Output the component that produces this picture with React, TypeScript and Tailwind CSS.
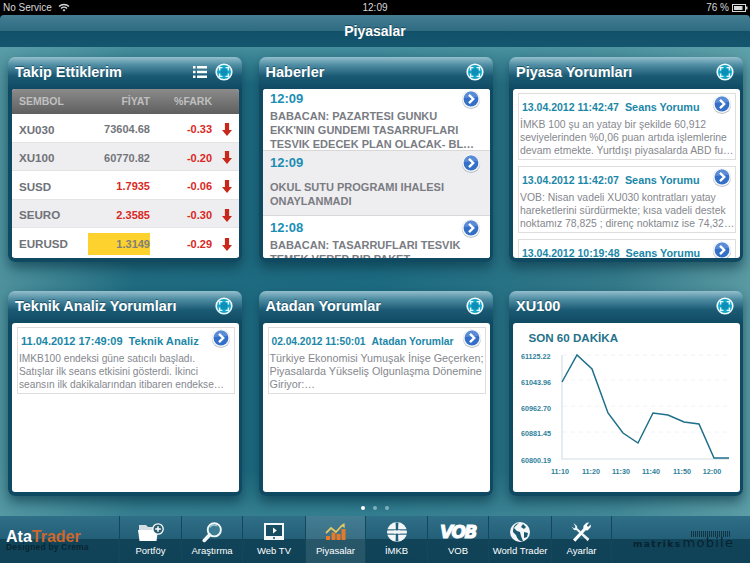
import React from "react";

function Expand() {
  return (
    <svg width="18" height="18" viewBox="0 0 18 18" className="shrink-0">
      <circle cx="9" cy="9" r="8.6" fill="#f2fbfd" />
      <circle cx="9" cy="9" r="7" fill="#12a6cc" />
      <circle cx="9" cy="9" r="3.6" fill="#0b8fb6" />
      <path d="M4.600 7.400V4.600h2.800M10.600 4.600h2.800v2.800M13.400 10.600v2.800h-2.800M7.400 13.400H4.600v-2.800" fill="none" stroke="#eaf9fd" strokeWidth="1.400" />
    </svg>
  );
}

function Go() {
  return (
    <svg width="20" height="20" viewBox="0 0 20 20" className="shrink-0">
      <circle cx="10" cy="10.800" r="9.200" fill="#8f98a3" opacity=".6" />
      <circle cx="10" cy="10" r="9" fill="#f4f6f9" />
      <circle cx="10" cy="10" r="7.400" fill="#3470c8" />
      <path d="M2.800 9a7.400 7.400 0 0 1 14.400 -1z" fill="#7aa3e4" opacity=".55" />
      <path d="M8 5.800l4.200 4.200L8 14.200" fill="none" stroke="#fff" strokeWidth="2.400" />
    </svg>
  );
}

function Down() {
  return (
    <svg width="10" height="13" viewBox="0 0 10 13" className="shrink-0">
      <path d="M2.900 0h4.200v7H10l-5 6-5-6h2.900z" fill="#c8281a" />
    </svg>
  );
}

function Panel({ title, extra, children }: { title: string; extra?: React.ReactNode; children: React.ReactNode }) {
  return (
    <div className="h-[205px] rounded-[7px] pl-1 pr-[3px] pb-1 shadow-[0_6px_12px_rgba(8,50,66,.6)] flex flex-col bg-[linear-gradient(#94bfcd_0px,#4f8da3_8px,#1b5a74_19px,#0f4a62_32px)]">
      <div className="h-8 shrink-0 flex items-center pl-[3px] pr-[6px] pb-[2px] gap-2">
        <div className="flex-1 text-white font-bold text-[14.5px] leading-none whitespace-nowrap [text-shadow:0_-1px_0_rgba(0,40,60,.5)]">{title}</div>
        {extra}
        <Expand />
      </div>
      <div className="flex-1 min-h-0 bg-white rounded-[3px] overflow-hidden">{children}</div>
    </div>
  );
}

const rows = [
  ["XU030", "73604.68", "-0.33", false, false],
  ["XU100", "60770.82", "-0.20", false, true],
  ["SUSD", "1.7935", "-0.06", true, false],
  ["SEURO", "2.3585", "-0.30", true, true],
  ["EURUSD", "1.3149", "-0.29", false, false],
] as const;

function Table() {
  return (
    <div className="font-bold">
      <div className="h-[25px] flex items-center bg-[linear-gradient(#8b8b8b,#5f5f5f)] text-[#c0c0c0] text-[10.5px] pl-[7px]">
        <div className="w-[60px]">SEMBOL</div>
        <div className="w-[71px] text-right">FİYAT</div>
        <div className="w-[62px] text-right">%FARK</div>
      </div>
      {rows.map(([a, b, c, red, alt], i) => (
        <div key={a} className={`h-[28.6px] flex items-center pl-[7px] pt-[3px] ${alt ? "bg-[#eeedef]" : "bg-white"} ${i < 4 ? "border-b border-[#e4e4e4]" : ""}`}>
          <div className="w-[60px] text-[#6f7279] text-[11.6px]">{a}</div>
          <div className="w-[71px] flex justify-end text-[11px]">
            <div className={`text-right ${i === 4 ? "bg-[#fdd22f] w-[62px] h-[22px] leading-[22px] text-[#808078]" : ""} ${red ? "text-[#d9281e]" : "text-[#73757b]"}`}>{b}</div>
          </div>
          <div className="w-[62px] text-right text-[#d9281e] text-[11px]">{c}</div>
          <div className="ml-[10px]"><Down /></div>
        </div>
      ))}
    </div>
  );
}

const news = [
  { t: "12:09", lines: ["BABACAN: PAZARTESI GUNKU", "EKK'NIN GUNDEMI TASARRUFLARI", "TESVIK EDECEK PLAN OLACAK- BL…"], cls: "bg-white h-[62px] pt-[1px]", blank: false },
  { t: "12:09", lines: ["OKUL SUTU PROGRAMI IHALESI", "ONAYLANMADI"], cls: "bg-[#eeedef] h-[65px] pt-[3px]", blank: true },
  { t: "12:08", lines: ["BABACAN: TASARRUFLARI TESVIK", "TEMEK VEREP BIR PAKET"], cls: "bg-white h-[64px] pt-[3px]", blank: false },
];

function News() {
  return (
    <div>
      {news.map((n, i) => (
        <div key={i} className={`pl-[7.5px] pr-[9px] border-b border-[#d8d8d8] ${n.cls}`}>
          <div className="flex items-center justify-between h-[18px]">
            <span className="text-[#1b8db5] font-bold text-[13px]">{n.t}</span>
            <Go />
          </div>
          <div className={`text-[#797c83] font-bold text-[11px] leading-[14px] whitespace-nowrap ${n.blank ? "mt-[8px]" : "mt-[1px]"}`}>
            {n.lines.map((l, j) => <div key={j} className="h-[14px]">{l}</div>)}
          </div>
        </div>
      ))}
    </div>
  );
}

function Comment({ head, kind, lines, headCls, kindCls, bodyCls }: { head: string; kind: string; lines: string[]; headCls: string; kindCls: string; bodyCls: string }) {
  return (
    <div className="border border-[#dedede] bg-white pl-[1px] pr-[3px] h-[67px] mb-[6px]">
      <div className="flex items-start justify-between h-[20px]">
        <div className="text-[#1b87a8] font-bold whitespace-nowrap pl-[2px] mt-[4px] leading-[16px]">
          <span className={headCls}>{head}</span>
          <span className={`ml-[6px] ${kindCls}`}>{kind}</span>
        </div>
        <Go />
      </div>
      <div className={`text-[#85888e] leading-[13px] mt-[4px] whitespace-nowrap ${bodyCls}`}>
        {lines.map((l, i) => <div key={i}>{l}</div>)}
      </div>
    </div>
  );
}

function Chart() {
  const font = "'Liberation Sans',sans-serif";
  return (
    <svg width="227" height="168" viewBox="0 0 227 168" className="block">
      <text x="15.500" y="19" fontSize="11.600" fontWeight="700" fill="#24728a" fontFamily={font}>SON 60 DAKİKA</text>
      {[32, 57, 83, 109].map((y) => (
        <line key={y} x1="50" x2="216" y1={y} y2={y} stroke="#eef2f4" strokeDasharray="4 4" />
      ))}
      <path d="M49 32V136H216" fill="none" stroke="#dfe8ec" strokeWidth="1.600" />
      <polyline points="49,59 64,32 79,46 95,90 110,110 125,120 140,90 155,92 171,99 186,101 201,135 216,135" fill="none" stroke="#1f6f8a" strokeWidth="1.500" />
      {["61125.22", "61043.96", "60962.70", "60881.45", "60800.19"].map((t, i) => (
        <text key={t} x="8" y={[36, 62, 88, 113, 140][i]} fontSize="7.200" fontWeight="700" fill="#2f7f9a" fontFamily={font}>{t}</text>
      ))}
      {["11:10", "11:20", "11:30", "11:40", "11:50", "12:00"].map((t, i) => (
        <text key={t} x={[47, 78, 108, 138, 169, 199][i]} y="151" textAnchor="middle" fontSize="7.200" fontWeight="700" fill="#2f7f9a" fontFamily={font}>{t}</text>
      ))}
    </svg>
  );
}

const tabs: { label: string; icon: React.ReactNode; active?: boolean; cls: string }[] = [
  { label: "Portföy", cls: "w-[62px]", icon: (
    <svg width="26" height="18" viewBox="0 0 26 18"><path d="M1 6V2h7l2 2h9v3H1z" fill="#d5dfe3" /><path d="M0 7h20l-1.500 11H1.500z" fill="#fff" /><circle cx="20" cy="6" r="5.200" fill="#2a5c70" stroke="#fff" strokeWidth="1.300" /><path d="M20 3.200v5.600M17.200 6h5.600" stroke="#fff" strokeWidth="1.500" /></svg>
  ) },
  { label: "Araştırma", cls: "w-[61px]", icon: (
    <svg width="20" height="21" viewBox="0 0 20 21"><circle cx="12.300" cy="7.800" r="6.600" fill="#3b7d93" stroke="#f2f6f7" strokeWidth="1.900" /><path d="M7.800 5.500a5 5 0 0 1 7-1.500" fill="none" stroke="#a8cad5" strokeWidth="1.200" /><path d="M7.500 13L2.300 18.400" stroke="#f2f6f7" strokeWidth="3.600" strokeLinecap="round" /></svg>
  ) },
  { label: "Web TV", cls: "w-[63px]", icon: (
    <svg width="20" height="18" viewBox="0 0 20 18"><rect x="0" y="0" width="20" height="17" fill="#f4f7f8" /><rect x="2" y="2" width="16" height="11" fill="#174c61" /><path d="M9 4.500l3.800 3-3.800 3z" fill="#fff" /><circle cx="10" cy="15" r="1" fill="#174c61" /></svg>
  ) },
  { label: "Piyasalar", active: true, cls: "w-[60px]", icon: (
    <svg width="21" height="18" viewBox="0 0 21 18"><path d="M1 17v-4h4v4zM6.500 17V9.500h4V17zM11.500 17v-6h4v6zM16.500 17V6h4v11z" fill="#e4792a" /><path d="M1 10l5-5 5 4 6-6.500" fill="none" stroke="#e2c765" strokeWidth="1.800" /><path d="M19.500 0l.3 5-4.300-2.500z" fill="#e2c765" /></svg>
  ) },
  { label: "İMKB", cls: "w-[62px]", icon: (
    <svg width="20" height="20" viewBox="0 0 20 20"><circle cx="10" cy="10" r="10" fill="#f2f6f7" /><path d="M8.500 0.500C9 4 9 16 8.500 19.500h3C11 16 11 4 11.500 0.500z" fill="#21607a" /><rect x="0" y="7.300" width="20" height="1.100" fill="#21607a" /><rect x="0" y="11.600" width="20" height="1.100" fill="#21607a" /><rect x="7" y="8.400" width="6" height="3.200" fill="#f2f6f7" /></svg>
  ) },
  { label: "VOB", cls: "w-[61px]", icon: (
    <span className="text-white font-bold italic text-[17px] tracking-[-1.5px] font-['DejaVu_Sans'] leading-none [-webkit-text-stroke:1px_white]">VOB</span>
  ) },
  { label: "World Trader", cls: "w-[63px]", icon: (
    <svg width="20" height="20" viewBox="0 0 20 20"><circle cx="10" cy="10" r="10" fill="#f2f6f7" /><path d="M9 1c-2 2-4 3-5 5l3 3 3 1 1 4 2 5c-4 1-6-3-7-6l-3-3C3 4 5 2 9 1zM13 2l3 3-2 2-3-2zM14 10l4 1-1 4-3 1z" fill="#1c5770" /></svg>
  ) },
  { label: "Ayarlar", cls: "w-[60px]", icon: (
    <svg width="21" height="21" viewBox="0 0 21 21"><path d="M2.500 1L6 4l.3 2.300 12 10.500-1.500 2.500L5.500 8.300 3 8 .6 4.500l2.600 2L4.500 5z" fill="#eef3f4" /><path d="M2 17.500L12.300 6.600 12.500 3.800 15.500.8 18.300.6 15.800 3.300 17 5 19.700 2.500 19.800 5 16.800 8.300 14.500 8.600 4.300 19.800z" fill="#fff" /></svg>
  ) },
];

export default function App() {
  return (
    <div className="w-[750px] h-[563px] overflow-hidden flex flex-col font-['Liberation_Sans',Arial,sans-serif] bg-black">
      <div className="h-[15px] shrink-0 bg-black text-[#d8d8d8] text-[10px] leading-[15px] px-[3px] flex items-center relative">
        <span>No Service</span>
        <svg className="ml-[6px]" width="12" height="9" viewBox="0 0 12 9"><path d="M6 8.500L4.500 7a2 2 0 0 1 3 0zM3.500 6L2.500 5a5 5 0 0 1 7 0l-1 1a3.600 3.600 0 0 0-5 0zM1.500 4L.5 3a8 8 0 0 1 11 0l-1 1a6.500 6.500 0 0 0-9 0z" fill="#d8d8d8" /></svg>
        <span className="absolute left-0 right-0 text-center">12:09</span>
        <div className="ml-auto flex items-center gap-[3px] -mr-[1px]">
          <span>76 %</span>
          <svg width="16" height="8" viewBox="0 0 16 8"><rect x=".5" y=".5" width="13" height="7" fill="none" stroke="#d8d8d8" /><rect x="2" y="2" width="8.500" height="4" fill="#d8d8d8" /><rect x="14" y="2.500" width="1.500" height="3" fill="#d8d8d8" /></svg>
        </div>
      </div>

      <div className="h-[32px] shrink-0 rounded-t-[4px] bg-[linear-gradient(#437e93_0%,#2f6b81_50%,#125069_50%,#15566f_100%)] flex items-center justify-center text-white font-bold text-[14px] [text-shadow:0_-1px_0_rgba(0,30,50,.5)]">
        Piyasalar
      </div>

      <div className="flex-1 min-h-0 relative bg-[linear-gradient(rgba(95,165,175,.6)_0%,rgba(95,165,175,0)_8%,rgba(95,165,175,0)_90%,rgba(95,165,175,.35)_100%),linear-gradient(90deg,#4f929d_0%,#206b80_18%,#1c6a80_50%,#33798a_82%,#5a9aa2_100%)] pt-[10px] pl-2">
        <div className="grid grid-cols-[234px_234px_234px] gap-x-[16.5px] gap-y-[29px]">
          <Panel title="Takip Ettiklerim" extra={
            <svg width="14" height="12" viewBox="0 0 14 12"><path d="M0 0h2.500v2.500H0zM4 0h10v2.500H4zM0 4.700h2.500v2.500H0zM4 4.700h10v2.500H4zM0 9.400h2.500v2.500H0zM4 9.400h10v2.500H4z" fill="#fff" /></svg>
          }>
            <Table />
          </Panel>
          <Panel title="Haberler"><News /></Panel>
          <Panel title="Piyasa Yorumları">
            <div className="pl-[5px] pr-[4px] pt-[4px]">
              <Comment headCls="text-[10.5px]" kindCls="text-[10.8px]" bodyCls="text-[10.4px]" head="13.04.2012 11:42:47" kind="Seans Yorumu" lines={["İMKB 100 şu an yatay bir şekilde  60,912", "seviyelerinden %0,06 puan artıda işlemlerine", "devam etmekte. Yurtdışı piyasalarda ABD fu…"]} />
              <Comment headCls="text-[10.5px]" kindCls="text-[10.8px]" bodyCls="text-[10.4px]" head="13.04.2012 11:42:07" kind="Seans Yorumu" lines={["VOB: Nisan vadeli XU030 kontratları yatay", "hareketlerini sürdürmekte;  kısa vadeli destek", "noktamız 78,825 ; direnç noktamız ise 74,32…"]} />
              <Comment headCls="text-[10.5px]" kindCls="text-[10.8px]" bodyCls="text-[10.4px]" head="13.04.2012 10:19:48" kind="Seans Yorumu" lines={[""]} />
            </div>
          </Panel>
          <Panel title="Teknik Analiz Yorumları">
            <div className="pl-[5px] pr-[4px] pt-[4px]">
              <Comment headCls="text-[11px]" kindCls="text-[11.2px]" bodyCls="text-[10.2px]" head="11.04.2012 17:49:09" kind="Teknik Analiz" lines={["IMKB100 endeksi güne satıcılı başladı.", "Satışlar ilk seans etkisini gösterdi. İkinci", "seansın ilk dakikalarından itibaren endekse…"]} />
            </div>
          </Panel>
          <Panel title="Atadan Yorumlar">
            <div className="pl-[5px] pr-[4px] pt-[4px]">
              <Comment headCls="text-[10.2px]" kindCls="text-[10.3px]" bodyCls="text-[10.8px]" head="02.04.2012 11:50:01" kind="Atadan Yorumlar" lines={["Türkiye Ekonomisi Yumuşak İnişe Geçerken;", "Piyasalarda Yükseliş Olgunlaşma Dönemine", "Giriyor:…"]} />
            </div>
          </Panel>
          <Panel title="XU100"><Chart /></Panel>
        </div>
        <div className="absolute left-[361px] top-[459px] flex gap-2">
          <span className="w-1 h-1 rounded-full bg-white" />
          <span className="w-1 h-1 rounded-full bg-[#7fb0bd]" />
          <span className="w-1 h-1 rounded-full bg-[#7fb0bd]" />
        </div>
      </div>

      <div className="h-[47px] shrink-0 flex bg-[linear-gradient(#2f6f87_0%,#245f78_48%,#114459_48%,#0f4257_100%)]">
        <div className="w-[119px] shrink-0 pl-[6px] pt-[14px]">
          <div className="font-bold text-[16px] leading-[13px]">
            <span className="text-white">Ata</span><span className="text-[#cf672b]">Trader</span>
          </div>
          <div className="text-[#0a2633] text-[8.500px] leading-[8px] tracking-[0.2px] font-bold">Designed by Crema</div>
        </div>
        {tabs.map((t) => (
          <div key={t.label} className={`shrink-0 border-l border-[#13475c] flex flex-col items-center pt-[4px] ${t.cls} ${t.active ? "bg-white/10" : ""}`}>
            <div className="h-[24px] flex items-center justify-center">{t.icon}</div>
            <div className="text-white text-[9.500px] whitespace-nowrap">{t.label}</div>
          </div>
        ))}
        <div className="flex-1 border-l border-[#13475c] relative">
          <div className="absolute left-[21px] top-[20px] text-[#072230] text-[9px] font-bold tracking-[1.400px] whitespace-nowrap leading-[14px] font-['DejaVu_Sans']">
            matriks<span className="text-[13px] font-normal tracking-[1.300px] ml-[1px]">mobile</span>
          </div>
          <div className="absolute left-[79px] top-[15px] w-[40px] h-[6px] bg-[repeating-linear-gradient(90deg,#0a2836_0_1px,transparent_1px_2px)] opacity-80" />
        </div>
      </div>
    </div>
  );
}
